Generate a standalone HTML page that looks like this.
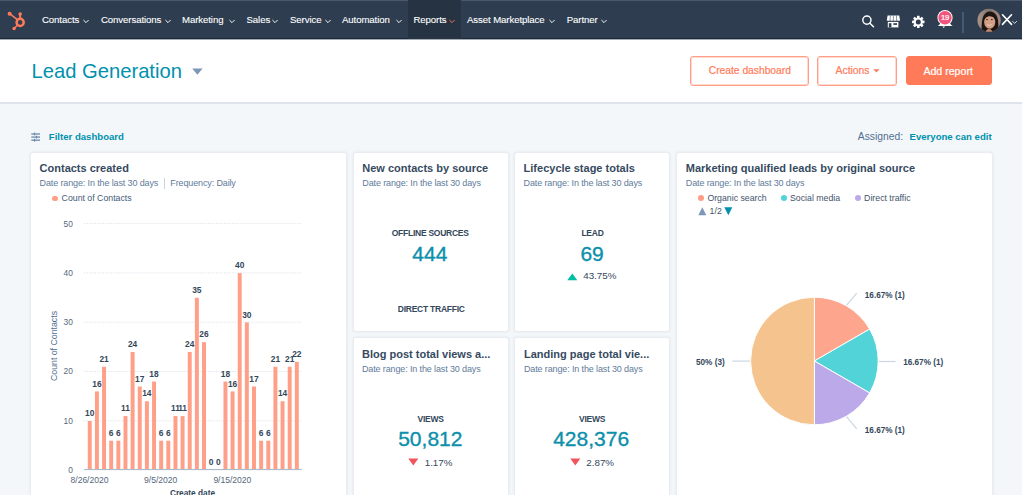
<!DOCTYPE html>
<html><head><meta charset="utf-8">
<style>
*{margin:0;padding:0;box-sizing:border-box}
html,body{width:1022px;height:495px;overflow:hidden;background:#f4f7fa;font-family:"Liberation Sans",sans-serif}
.t{position:absolute;line-height:1;white-space:nowrap}
#nav{position:absolute;left:0;top:0;width:1022px;height:39px;background:#2e3e50}
#navt{position:absolute;left:0;top:0;width:1022px;height:1px;background:#4a5867}
#navb{position:absolute;left:0;top:38px;width:1022px;height:1px;background:#1c2a39}
#navsh{position:absolute;left:0;top:39px;width:1022px;height:1px;background:#a3abb5}
.nv{color:#fff;font-size:9.6px;top:15px;letter-spacing:-0.08px;-webkit-text-stroke:0.1px #fff}
.chev{position:absolute;top:19px;width:5px;height:3px}
#hdr{position:absolute;left:0;top:40px;width:1022px;height:64px;background:#fff;border-bottom:2px solid #dfe3eb}
.btn{position:absolute;top:56px;height:30px;border:1px solid #ff9f87;border-radius:3px;background:#fff;box-shadow:inset 0 0 0 1px rgba(255,170,148,0.45)}
.bt{-webkit-text-stroke:0.2px currentColor}
.card{position:absolute;background:#fff;border:1px solid #e9edf2;border-radius:3px;box-shadow:0 0 2.5px rgba(45,62,80,0.10)}
.ttl{color:#364a5f;font-weight:700;font-size:11px}
.dr{color:#5f7c9b;font-size:9px;letter-spacing:-0.13px}
.lbl{color:#33475b;font-weight:700;font-size:8.5px;letter-spacing:-0.25px}
.big{color:#0b8fab;font-size:21px;-webkit-text-stroke:0.35px #0b8fab}
.bl{color:#33475b;font-weight:700;font-size:8.4px;width:30px;text-align:center}
.yl{color:#56687c;font-size:8.4px;width:20px;text-align:right}
.xl{color:#56687c;font-size:8.6px;letter-spacing:-0.05px}
.pl{color:#33475b;font-weight:700;font-size:8.2px}
.pct{color:#33475b;font-size:9.8px}
</style></head><body>
<div id="nav">
  <div id="navt"></div><div id="navb"></div>
  <svg style="position:absolute;left:0;top:0" width="40" height="39" viewBox="0 0 40 39">
    <g fill="none" stroke="#ff7a59" stroke-linecap="round">
      <circle cx="20.15" cy="22.4" r="3.55" stroke-width="2.5"/>
      <line x1="9.65" y1="13.66" x2="17.6" y2="19.8" stroke-width="1.5"/>
      <line x1="20.15" y1="14.1" x2="20.15" y2="19" stroke-width="1.9"/>
      <line x1="14.1" y1="28.45" x2="17.6" y2="25" stroke-width="1.5"/>
    </g>
    <g fill="#ff7a59">
      <circle cx="9.65" cy="13.66" r="2.0"/>
      <circle cx="20.15" cy="14.1" r="1.8"/>
      <circle cx="14.1" cy="28.45" r="1.7"/>
    </g>
  </svg>
  <div class="t nv" style="left:42px">Contacts</div>
  <div class="t nv" style="left:101px">Conversations</div>
  <div class="t nv" style="left:182px">Marketing</div>
  <div class="t nv" style="left:246.5px">Sales</div>
  <div class="t nv" style="left:290px">Service</div>
  <div class="t nv" style="left:342px">Automation</div>
  <div style="position:absolute;left:408px;top:0;width:53px;height:39px;background:#253342"></div>
  <div class="t nv" style="left:413.5px">Reports</div>
  <div class="t nv" style="left:467px">Asset Marketplace</div>
  <div class="t nv" style="left:566.7px">Partner</div>
  <svg style="position:absolute;left:83px;top:18.6px" width="7" height="5" viewBox="0 0 7 5"><polyline points="0.4,1 3,3.6 5.6,1" fill="none" stroke="#fff" stroke-width="0.95"/></svg>
  <svg style="position:absolute;left:165px;top:18.6px" width="7" height="5" viewBox="0 0 7 5"><polyline points="0.4,1 3,3.6 5.6,1" fill="none" stroke="#fff" stroke-width="0.95"/></svg>
  <svg style="position:absolute;left:229px;top:18.6px" width="7" height="5" viewBox="0 0 7 5"><polyline points="0.4,1 3,3.6 5.6,1" fill="none" stroke="#fff" stroke-width="0.95"/></svg>
  <svg style="position:absolute;left:272px;top:18.6px" width="7" height="5" viewBox="0 0 7 5"><polyline points="0.4,1 3,3.6 5.6,1" fill="none" stroke="#fff" stroke-width="0.95"/></svg>
  <svg style="position:absolute;left:324.8px;top:18.6px" width="7" height="5" viewBox="0 0 7 5"><polyline points="0.4,1 3,3.6 5.6,1" fill="none" stroke="#fff" stroke-width="0.95"/></svg>
  <svg style="position:absolute;left:396.4px;top:18.6px" width="7" height="5" viewBox="0 0 7 5"><polyline points="0.4,1 3,3.6 5.6,1" fill="none" stroke="#fff" stroke-width="0.95"/></svg>
  <svg style="position:absolute;left:449.2px;top:18.6px" width="7" height="5" viewBox="0 0 7 5"><polyline points="0.4,1 3,3.6 5.6,1" fill="none" stroke="#ff7a59" stroke-width="0.95"/></svg>
  <svg style="position:absolute;left:549px;top:18.6px" width="7" height="5" viewBox="0 0 7 5"><polyline points="0.4,1 3,3.6 5.6,1" fill="none" stroke="#fff" stroke-width="0.95"/></svg>
  <svg style="position:absolute;left:600.5px;top:18.6px" width="7" height="5" viewBox="0 0 7 5"><polyline points="0.4,1 3,3.6 5.6,1" fill="none" stroke="#fff" stroke-width="0.95"/></svg>
  <svg style="position:absolute;left:858px;top:12px" width="20" height="20" viewBox="0 0 20 20"><circle cx="8.9" cy="8.1" r="4.1" fill="none" stroke="#fff" stroke-width="1.45"/><line x1="11.9" y1="11.2" x2="15.5" y2="14.7" stroke="#fff" stroke-width="1.5" stroke-linecap="round"/></svg>
  <svg style="position:absolute;left:884px;top:12px" width="20" height="20" viewBox="0 0 20 20"><path d="M3.6 3.6h11.6l0.8 4.6v0.4h-13.2v-0.4z" fill="#fff"/><path d="M2.8 8.4q1.65 1.2 3.3 0q1.65 1.2 3.3 0q1.65 1.2 3.3 0q1.65 1.2 3.3 0z" fill="#fff"/><g stroke="#2e3e50" stroke-width="0.55"><line x1="6.3" y1="3.6" x2="6.0" y2="8.8"/><line x1="9.35" y1="3.6" x2="9.35" y2="8.8"/><line x1="12.4" y1="3.6" x2="12.7" y2="8.8"/></g><path d="M3.8 9.9h10.6v5.5h-10.6z" fill="#fff"/><rect x="4.8" y="11.2" width="2.6" height="4.2" fill="#2e3e50"/><rect x="9.4" y="11.2" width="3.6" height="1.7" fill="#2e3e50"/></svg>
  <svg style="position:absolute;left:908px;top:12px" width="20" height="20" viewBox="0 0 20 20"><g transform="translate(10.3 9.9)"><g fill="#fff"><circle r="4.5"/><rect x="-1.3" y="-6.2" width="2.6" height="12.4" rx="0.4"/><rect x="-6.2" y="-1.3" width="12.4" height="2.6" rx="0.4"/><rect x="-1.3" y="-6.2" width="2.6" height="12.4" rx="0.4" transform="rotate(45)"/><rect x="-1.3" y="-6.2" width="2.6" height="12.4" rx="0.4" transform="rotate(-45)"/></g><circle r="2.5" fill="#2e3e50"/></g></svg>
  <svg style="position:absolute;left:934px;top:6px" width="24" height="26" viewBox="0 0 24 26"><path d="M3.6 19.9c1.8-0.9 3.2-2.6 3.4-5.5h8.4c0.2 2.9 1.6 4.6 3.4 5.5z" fill="#fff"/><path d="M8.3 20.6h2.8l-1.4 1.4z" fill="#fff"/><circle cx="11" cy="11.7" r="7.6" fill="#fff"/><circle cx="11" cy="11.7" r="6.7" fill="#f2547d"/><text x="11" y="13.7" font-family="Liberation Sans" font-size="7.6" fill="#fff" stroke="#fff" stroke-width="0.2" text-anchor="middle" letter-spacing="-0.3">19</text></svg>
  <div style="position:absolute;left:962px;top:11.7px;width:1.6px;height:21.5px;background:#425b76"></div>
  <svg style="position:absolute;left:977px;top:8px" width="24" height="25" viewBox="0 0 24 25"><defs><clipPath id="av"><circle cx="12.1" cy="12.25" r="11.6"/></clipPath><linearGradient id="avbg" x1="0" y1="0" x2="1" y2="0"><stop offset="0" stop-color="#b0968a"/><stop offset="0.5" stop-color="#7d7470"/><stop offset="1" stop-color="#a88a80"/></linearGradient></defs><g clip-path="url(#av)"><rect width="24" height="25" fill="url(#avbg)"/><path d="M4.6 25c0-7 0-14 2.4-18 1.8-2.8 4-3.8 6.4-3.6 3.5 0.3 6.5 3 7.4 7.5 0.6 3.5 0.6 9.5 1 14.1z" fill="#1f1613"/><ellipse cx="12.7" cy="14.2" rx="5.5" ry="6.5" fill="#d3a085"/><path d="M6.4 12.5c0.6-4.5 2.6-7 5.6-7.4 3.5-0.4 6 1.8 6.8 5.5-2.2-1.8-4.6-2.6-7-2.4-2 0.2-3.8 1.8-5.4 4.3z" fill="#1f1613"/><ellipse cx="10" cy="11.6" rx="1" ry="0.7" fill="#3a2620"/><ellipse cx="14.8" cy="11.6" rx="1" ry="0.7" fill="#3a2620"/><path d="M10.2 16.6c1.4 0.9 3.3 0.9 4.6 0" stroke="#ecd2c4" stroke-width="0.9" fill="none"/><path d="M8 25c0.8-2.5 2.2-4 4-4s3.2 1.5 4 4z" fill="#c08d74"/></g></svg>
  <svg style="position:absolute;left:1000px;top:13px" width="22" height="14" viewBox="0 0 22 14"><path d="M2.5 1.8l9 9.6M11.5 1.8l-9 9.6" stroke="#fff" stroke-width="1.6" stroke-linecap="round"/><polyline points="12.3,8.1 14.6,10.4 16.9,8.1" fill="none" stroke="#fff" stroke-width="0.8"/></svg>
</div>
<div id="hdr"></div>
<div id="navsh"></div>
<div class="t" style="left:31.5px;top:60.5px;font-size:20.2px;color:#0091ae">Lead Generation</div>
<svg style="position:absolute;left:192px;top:68px" width="11" height="7" viewBox="0 0 11 7"><path d="M0.2 0.4h10.4L5.4 6.8z" fill="#7c98b6"/></svg>
<div class="btn" style="left:690px;width:119px"></div>
<div class="t bt" style="left:708.8px;top:65.5px;font-size:10.25px;color:#ff7a59">Create dashboard</div>
<div class="btn" style="left:817px;width:80px"></div>
<div class="t bt" style="left:835.6px;top:65.5px;font-size:10.35px;color:#ff7a59">Actions</div>
<svg style="position:absolute;left:873px;top:69px" width="7" height="4" viewBox="0 0 7 4"><path d="M0.3 0.2h6.2L3.4 3.6z" fill="#ff7a59"/></svg>
<div class="btn" style="left:905.5px;width:86.5px;top:56px;height:29px;background:#ff7a59;border-color:#ff7a59;box-shadow:none"></div>
<div class="t bt" style="left:923.4px;top:65.5px;font-size:10.6px;color:#fff">Add report</div>
<svg style="position:absolute;left:30px;top:132px" width="11" height="10" viewBox="0 0 11 10"><g stroke="#7c98b6" stroke-width="1.5"><line x1="1.3" y1="2" x2="10" y2="2"/><line x1="1.3" y1="5.1" x2="10" y2="5.1"/><line x1="1.3" y1="8.2" x2="10" y2="8.2"/></g><g fill="#6a86a5"><rect x="4" y="0.6" width="1.1" height="2.8"/><rect x="6" y="3.7" width="1.1" height="2.8"/><rect x="4" y="6.8" width="1.1" height="2.8"/></g></svg>
<div class="t" style="left:48.8px;top:132.4px;font-size:9.6px;font-weight:700;color:#0091ae">Filter dashboard</div>
<div class="t" style="left:857.8px;top:132.3px;font-size:10.3px;color:#516f90">Assigned:</div>
<div class="t" style="left:909.5px;top:132.4px;font-size:9.6px;font-weight:700;color:#0091ae">Everyone can edit</div>

<div class="card" style="left:30px;top:152px;width:317px;height:360px"></div>
<div class="card" style="left:352.5px;top:152px;width:156px;height:180px"></div>
<div class="card" style="left:514px;top:152px;width:156px;height:180px"></div>
<div class="card" style="left:676px;top:152px;width:317px;height:360px"></div>
<div class="card" style="left:352.5px;top:337px;width:156px;height:180px"></div>
<div class="card" style="left:514px;top:337px;width:156px;height:180px"></div>

<div class="t ttl" style="left:39.6px;top:162.8px">Contacts created</div>
<div class="t dr" style="left:39.6px;top:179.2px">Date range: In the last 30 days</div>
<div style="position:absolute;left:164px;top:177.5px;width:1px;height:11px;background:#cbd6e2"></div>
<div class="t dr" style="left:170.3px;top:179.2px">Frequency: Daily</div>
<div style="position:absolute;left:52.3px;top:195.6px;width:5.5px;height:5.5px;border-radius:50%;background:#ff9d85"></div>
<div class="t" style="left:61.6px;top:193.8px;font-size:8.75px;color:#425b76">Count of Contacts</div>

<div class="t ttl" style="left:362.3px;top:162.8px">New contacts by source</div>
<div class="t dr" style="left:362.3px;top:179px">Date range: In the last 30 days</div>
<div class="t lbl" style="left:391.7px;top:229px">OFFLINE SOURCES</div>
<div class="t big" style="left:412.3px;top:242.9px">444</div>
<div class="t lbl" style="left:397.8px;top:305.3px">DIRECT TRAFFIC</div>

<div class="t ttl" style="left:523.6px;top:162.8px">Lifecycle stage totals</div>
<div class="t dr" style="left:523.6px;top:179px">Date range: In the last 30 days</div>
<div class="t lbl" style="left:581.4px;top:229px">LEAD</div>
<div class="t big" style="left:580.4px;top:243.2px">69</div>
<svg style="position:absolute;left:567px;top:272.5px" width="11" height="8" viewBox="0 0 11 8"><path d="M0.3 7.3h10L5.3 0.4z" fill="#00bda5"/></svg>
<div class="t pct" style="left:583.2px;top:271.4px">43.75%</div>

<div class="t ttl" style="left:362px;top:348.8px">Blog post total views a...</div>
<div class="t dr" style="left:362px;top:365.3px">Date range: In the last 30 days</div>
<div class="t lbl" style="left:417.6px;top:414.5px">VIEWS</div>
<div class="t big" style="left:398.2px;top:428.2px">50,812</div>
<svg style="position:absolute;left:408px;top:458px" width="11" height="8" viewBox="0 0 11 8"><path d="M0.3 0.6h10L5.3 7.4z" fill="#f2545b"/></svg>
<div class="t pct" style="left:424.7px;top:457.5px">1.17%</div>

<div class="t ttl" style="left:524px;top:348.8px">Landing page total vie...</div>
<div class="t dr" style="left:524px;top:365.3px">Date range: In the last 30 days</div>
<div class="t lbl" style="left:579px;top:414.5px">VIEWS</div>
<div class="t big" style="left:553.2px;top:428.2px">428,376</div>
<svg style="position:absolute;left:570px;top:458px" width="11" height="8" viewBox="0 0 11 8"><path d="M0.3 0.6h10L5.3 7.4z" fill="#f2545b"/></svg>
<div class="t pct" style="left:586.3px;top:457.5px">2.87%</div>

<div class="t ttl" style="left:685.8px;top:162.8px">Marketing qualified leads by original source</div>
<div class="t dr" style="left:685.8px;top:178.6px">Date range: In the last 30 days</div>
<div style="position:absolute;left:698px;top:195px;width:6px;height:6px;border-radius:50%;background:#ff9d85"></div>
<div class="t" style="left:707.4px;top:193.8px;font-size:8.75px;color:#3f546b">Organic search</div>
<div style="position:absolute;left:780.6px;top:195px;width:6px;height:6px;border-radius:50%;background:#51d3d9"></div>
<div class="t" style="left:790px;top:193.8px;font-size:8.75px;color:#3f546b">Social media</div>
<div style="position:absolute;left:854.6px;top:195px;width:6px;height:6px;border-radius:50%;background:#bda9ea"></div>
<div class="t" style="left:864.1px;top:193.8px;font-size:8.75px;color:#3f546b">Direct traffic</div>
<svg style="position:absolute;left:698px;top:207px" width="9" height="9" viewBox="0 0 9 9"><path d="M0.3 8.3h8L4.3 0.2z" fill="#7c98b6"/></svg>
<div class="t" style="left:709.6px;top:206.6px;font-size:8.75px;color:#3f546b">1/2</div>
<svg style="position:absolute;left:724px;top:207px" width="9" height="9" viewBox="0 0 9 9"><path d="M0.3 0.2h8L4.3 8.3z" fill="#0091ae"/></svg>
<!--CHART-->
<svg style="position:absolute;left:0;top:0" width="1022" height="495" viewBox="0 0 1022 495">
<line x1="83.6" y1="420.80" x2="301.7" y2="420.80" stroke="#e3e8ee" stroke-width="1" stroke-dasharray="1.6 1.1"/>
<line x1="83.6" y1="371.50" x2="301.7" y2="371.50" stroke="#e3e8ee" stroke-width="1" stroke-dasharray="1.6 1.1"/>
<line x1="83.6" y1="322.20" x2="301.7" y2="322.20" stroke="#e3e8ee" stroke-width="1" stroke-dasharray="1.6 1.1"/>
<line x1="83.6" y1="272.90" x2="301.7" y2="272.90" stroke="#e3e8ee" stroke-width="1" stroke-dasharray="1.6 1.1"/>
<line x1="83.6" y1="223.60" x2="301.7" y2="223.60" stroke="#e3e8ee" stroke-width="1" stroke-dasharray="1.6 1.1"/>
<rect x="87.80" y="421.00" width="3.95" height="48.10" fill="#ff9f88"/>
<rect x="94.94" y="391.42" width="3.95" height="77.68" fill="#ff9f88"/>
<rect x="102.08" y="366.77" width="3.95" height="102.33" fill="#ff9f88"/>
<rect x="109.22" y="440.72" width="3.95" height="28.38" fill="#ff9f88"/>
<rect x="116.36" y="440.72" width="3.95" height="28.38" fill="#ff9f88"/>
<rect x="123.50" y="416.07" width="3.95" height="53.03" fill="#ff9f88"/>
<rect x="130.64" y="351.98" width="3.95" height="117.12" fill="#ff9f88"/>
<rect x="137.78" y="386.49" width="3.95" height="82.61" fill="#ff9f88"/>
<rect x="144.92" y="401.28" width="3.95" height="67.82" fill="#ff9f88"/>
<rect x="152.06" y="381.56" width="3.95" height="87.54" fill="#ff9f88"/>
<rect x="159.20" y="440.72" width="3.95" height="28.38" fill="#ff9f88"/>
<rect x="166.34" y="440.72" width="3.95" height="28.38" fill="#ff9f88"/>
<rect x="173.48" y="416.07" width="3.95" height="53.03" fill="#ff9f88"/>
<rect x="180.62" y="416.07" width="3.95" height="53.03" fill="#ff9f88"/>
<rect x="187.76" y="351.98" width="3.95" height="117.12" fill="#ff9f88"/>
<rect x="194.90" y="297.75" width="3.95" height="171.35" fill="#ff9f88"/>
<rect x="202.04" y="342.12" width="3.95" height="126.98" fill="#ff9f88"/>
<rect x="223.46" y="381.56" width="3.95" height="87.54" fill="#ff9f88"/>
<rect x="230.60" y="391.42" width="3.95" height="77.68" fill="#ff9f88"/>
<rect x="237.74" y="273.10" width="3.95" height="196.00" fill="#ff9f88"/>
<rect x="244.88" y="322.40" width="3.95" height="146.70" fill="#ff9f88"/>
<rect x="252.02" y="386.49" width="3.95" height="82.61" fill="#ff9f88"/>
<rect x="259.16" y="440.72" width="3.95" height="28.38" fill="#ff9f88"/>
<rect x="266.30" y="440.72" width="3.95" height="28.38" fill="#ff9f88"/>
<rect x="273.44" y="366.77" width="3.95" height="102.33" fill="#ff9f88"/>
<rect x="280.58" y="401.28" width="3.95" height="67.82" fill="#ff9f88"/>
<rect x="287.72" y="366.77" width="3.95" height="102.33" fill="#ff9f88"/>
<rect x="294.86" y="361.84" width="3.95" height="107.26" fill="#ff9f88"/>
<rect x="84" y="469" width="217.7" height="1.1" fill="#a9bbcd"/>
</svg>
<div class="t bl" style="left:74.77px;top:409.19px">10</div>
<div class="t bl" style="left:81.91px;top:379.61px">16</div>
<div class="t bl" style="left:89.05px;top:354.96px">21</div>
<div class="t bl" style="left:96.19px;top:428.91px">6</div>
<div class="t bl" style="left:103.33px;top:428.91px">6</div>
<div class="t bl" style="left:110.47px;top:404.26px">11</div>
<div class="t bl" style="left:117.61px;top:340.17px">24</div>
<div class="t bl" style="left:124.75px;top:374.68px">17</div>
<div class="t bl" style="left:131.89px;top:389.47px">14</div>
<div class="t bl" style="left:139.03px;top:369.75px">18</div>
<div class="t bl" style="left:146.17px;top:428.91px">6</div>
<div class="t bl" style="left:153.31px;top:428.91px">6</div>
<div class="t bl" style="left:160.45px;top:404.26px">11</div>
<div class="t bl" style="left:167.59px;top:404.26px">11</div>
<div class="t bl" style="left:174.73px;top:340.17px">24</div>
<div class="t bl" style="left:181.87px;top:285.94px">35</div>
<div class="t bl" style="left:189.01px;top:330.31px">26</div>
<div class="t bl" style="left:196.16px;top:458.49px">0</div>
<div class="t bl" style="left:203.29px;top:458.49px">0</div>
<div class="t bl" style="left:210.43px;top:369.75px">18</div>
<div class="t bl" style="left:217.57px;top:379.61px">16</div>
<div class="t bl" style="left:224.72px;top:261.29px">40</div>
<div class="t bl" style="left:231.85px;top:310.59px">30</div>
<div class="t bl" style="left:238.99px;top:374.68px">17</div>
<div class="t bl" style="left:246.13px;top:428.91px">6</div>
<div class="t bl" style="left:253.28px;top:428.91px">6</div>
<div class="t bl" style="left:260.42px;top:354.96px">21</div>
<div class="t bl" style="left:267.56px;top:389.47px">14</div>
<div class="t bl" style="left:274.69px;top:354.96px">21</div>
<div class="t bl" style="left:281.84px;top:350.03px">22</div>
<div class="t yl" style="left:52.8px;top:466.00px">0</div>
<div class="t yl" style="left:52.8px;top:416.70px">10</div>
<div class="t yl" style="left:52.8px;top:367.40px">20</div>
<div class="t yl" style="left:52.8px;top:318.10px">30</div>
<div class="t yl" style="left:52.8px;top:268.80px">40</div>
<div class="t yl" style="left:52.8px;top:219.50px">50</div>
<div class="t xl" style="left:70.6px;top:476.12px">8/26/2020</div>
<div class="t xl" style="left:144.1px;top:476.12px">9/5/2020</div>
<div class="t xl" style="left:213.4px;top:476.12px">9/15/2020</div>
<div class="t" style="left:169.9px;top:489.1px;font-size:8.3px;font-weight:700;color:#33475b">Create date</div>
<div class="t" style="left:54.2px;top:346px;font-size:8.75px;color:#516f90;transform:translate(-50%,-50%) rotate(-90deg);transform-origin:center">Count of Contacts</div>
<svg style="position:absolute;left:0;top:0" width="1022" height="495" viewBox="0 0 1022 495">
<path d="M814.4 361.0 L814.40 297.20 A63.8 63.8 0 0 1 869.65 329.10 Z" fill="#fea58d" stroke="#fff" stroke-width="1"/>
<path d="M814.4 361.0 L869.65 329.10 A63.8 63.8 0 0 1 869.65 392.90 Z" fill="#51d3d8" stroke="#fff" stroke-width="1"/>
<path d="M814.4 361.0 L869.65 392.90 A63.8 63.8 0 0 1 814.40 424.80 Z" fill="#bca9ea" stroke="#fff" stroke-width="1"/>
<path d="M814.4 361.0 L814.40 424.80 A63.8 63.8 0 0 1 814.40 297.20 Z" fill="#f5c38e" stroke="#fff" stroke-width="1"/>
<g stroke="#cbd6e2" stroke-width="1.2" fill="none"><line x1="846.5" y1="305.3" x2="856.7" y2="293.1"/><line x1="879" y1="361.5" x2="895.6" y2="361.5"/><line x1="846.5" y1="416.7" x2="856.7" y2="428.9"/><line x1="732.4" y1="361.1" x2="750.1" y2="361.1"/></g>
</svg>
<div class="t pl" style="left:864.8px;top:292.26px">16.67% (1)</div>
<div class="t pl" style="left:903.2px;top:359.06px">16.67% (1)</div>
<div class="t pl" style="left:864.8px;top:426.66px">16.67% (1)</div>
<div class="t pl" style="left:696px;top:359.46px">50% (3)</div>
<!--/CHART-->
</body></html>
